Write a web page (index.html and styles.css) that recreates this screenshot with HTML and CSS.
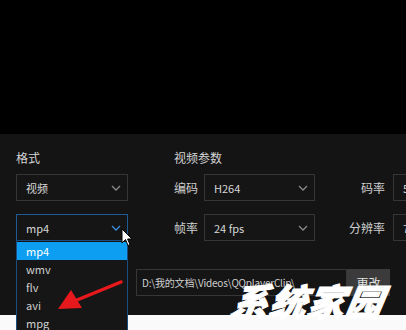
FILE: index.html
```html
<!DOCTYPE html>
<html lang="zh">
<head>
<meta charset="utf-8">
<link rel="stylesheet" href="styles.css">
</head>
<body>
<div class="video-area"></div>
<div class="panel">
  <div class="cols">
    <div class="col-format">
      <div class="heading">格式</div>
      <div class="select"><span>视频</span><svg class="chev" viewBox="0 0 10 6"><path d="M1 1 L5 5 L9 1"/></svg></div>
      <div class="select active"><span>mp4</span><svg class="chev" viewBox="0 0 10 6"><path d="M1 1 L5 5 L9 1"/></svg></div>
    </div>
    <div class="col-video">
      <div class="heading">视频参数</div>
      <div class="grid">
        <div class="lbl">编码</div>
        <div class="select"><span>H264</span><svg class="chev" viewBox="0 0 10 6"><path d="M1 1 L5 5 L9 1"/></svg></div>
        <div class="lbl r">码率</div>
        <div class="select cut"><span>5</span></div>
        <div class="lbl">帧率</div>
        <div class="select"><span>24 fps</span><svg class="chev" viewBox="0 0 10 6"><path d="M1 1 L5 5 L9 1"/></svg></div>
        <div class="lbl r">分辨率</div>
        <div class="select cut"><span>7</span></div>
      </div>
    </div>
  </div>
  <div class="path-row">
    <div class="path-input">D:\我的文档\Videos\QQplayerClip\</div>
    <div class="btn">更改</div>
  </div>
</div>
<div class="bottom-strip"></div>

<ul class="dropdown">
  <li class="sel">mp4</li>
  <li>wmv</li>
  <li>flv</li>
  <li>avi</li>
  <li>mpg</li>
</ul>

<svg class="red-arrow" viewBox="0 0 70 36">
  <path d="M66 3 L22 21" stroke="#e8191c" stroke-width="3.5" stroke-linecap="round" fill="none"/>
  <path d="M3 30 L16 11 L27 29 Z" fill="#e8191c"/>
</svg>

<svg class="cursor" viewBox="0 0 12 19">
  <path d="M1 1 L1 15 L4.5 11.5 L7 17.5 L9 16.6 L6.6 11 L11 11 Z" fill="#fff" stroke="#000" stroke-width="1"/>
</svg>

<div class="watermark">系统家园</div>
</body>
</html>
```
FILE: styles.css
```css
* { box-sizing: border-box; margin: 0; padding: 0; }
body {
  background: #000;
  font-family: "Noto Sans CJK SC", "Noto Sans", sans-serif;
  font-size: 12px;
  color: #cfcfcf;
  width: 406px;
  height: 330px;
  overflow: hidden;
  position: relative;
}
.video-area { height: 134px; background: #000; }
.panel {
  height: 181px;
  background: #141414;
  padding: 16px 0 0 16px;
  overflow: hidden;
}
.cols { display: flex; }
.heading {
  height: 16px;
  line-height: 16px;
  font-size: 12px;
  color: #d4d4d4;
  margin-bottom: 8px;
}
.col-format { flex: none; width: 112px; display: flex; flex-direction: column; gap: 13px; }
.col-format .heading { margin-bottom: -5px; }
.select {
  height: 27px;
  border: 1px solid #363636;
  background: #151515;
  display: flex;
  align-items: center;
  justify-content: space-between;
  padding: 0 6px 0 9px;
  font-size: 11px;
  color: #d8d8d8;
}
.select.active { border-color: #1f5a96; }
.select.active .chev path { stroke: #3a8ee0; }
.chev { width: 10px; height: 6px; }
.chev path { fill: none; stroke: #8a8a8a; stroke-width: 1.3; }
.col-video { flex: none; margin-left: 46px; }
.grid {
  display: grid;
  grid-template-columns: 30px 111px 78px 60px;
  row-gap: 13px;
  align-items: center;
}
.lbl { font-size: 12px; color: #cfcfcf; }
.lbl.r { text-align: right; padding-right: 8px; }
.select.cut { border-right: none; }
.path-row {
  display: flex;
  margin: 28px 0 0 120px;
  height: 27px;
}
.path-input {
  width: 211px;
  border: 1px solid #363636;
  background: #151515;
  display: flex;
  align-items: center;
  padding-left: 5px;
  font-size: 10px;
  letter-spacing: -0.2px;
  color: #cfcfcf;
  white-space: nowrap;
}
.btn {
  width: 43px;
  background: #3b3b3b;
  color: #e0e0e0;
  display: flex;
  align-items: center;
  justify-content: center;
  font-size: 12px;
}
.bottom-strip { height: 15px; background: #fafafa; }
.dropdown {
  position: absolute;
  left: 16px;
  top: 240px;
  width: 112px;
  height: 100px;
  list-style: none;
  background: #161616;
  border: 1px solid #1c4c80;
  padding-top: 1px;
}
.dropdown li {
  height: 18px;
  line-height: 18px;
  padding-left: 9px;
  font-size: 11px;
  color: #d0d0d0;
}
.dropdown li.sel { background: #0d9ef2; color: #fff; }
.red-arrow {
  position: absolute;
  left: 55px;
  top: 279px;
  width: 70px;
  height: 36px;
}
.cursor {
  position: absolute;
  left: 121px;
  top: 228px;
  width: 12px;
  height: 19px;
}
.watermark {
  position: absolute;
  left: 232px;
  top: 280px;
  font-size: 37px;
  line-height: 40px;
  font-weight: 900;
  font-style: italic;
  transform: skewX(-10deg);
  letter-spacing: 1px;
  color: #fff;
  white-space: nowrap;
  -webkit-text-stroke: 1px #fff;
}
```
